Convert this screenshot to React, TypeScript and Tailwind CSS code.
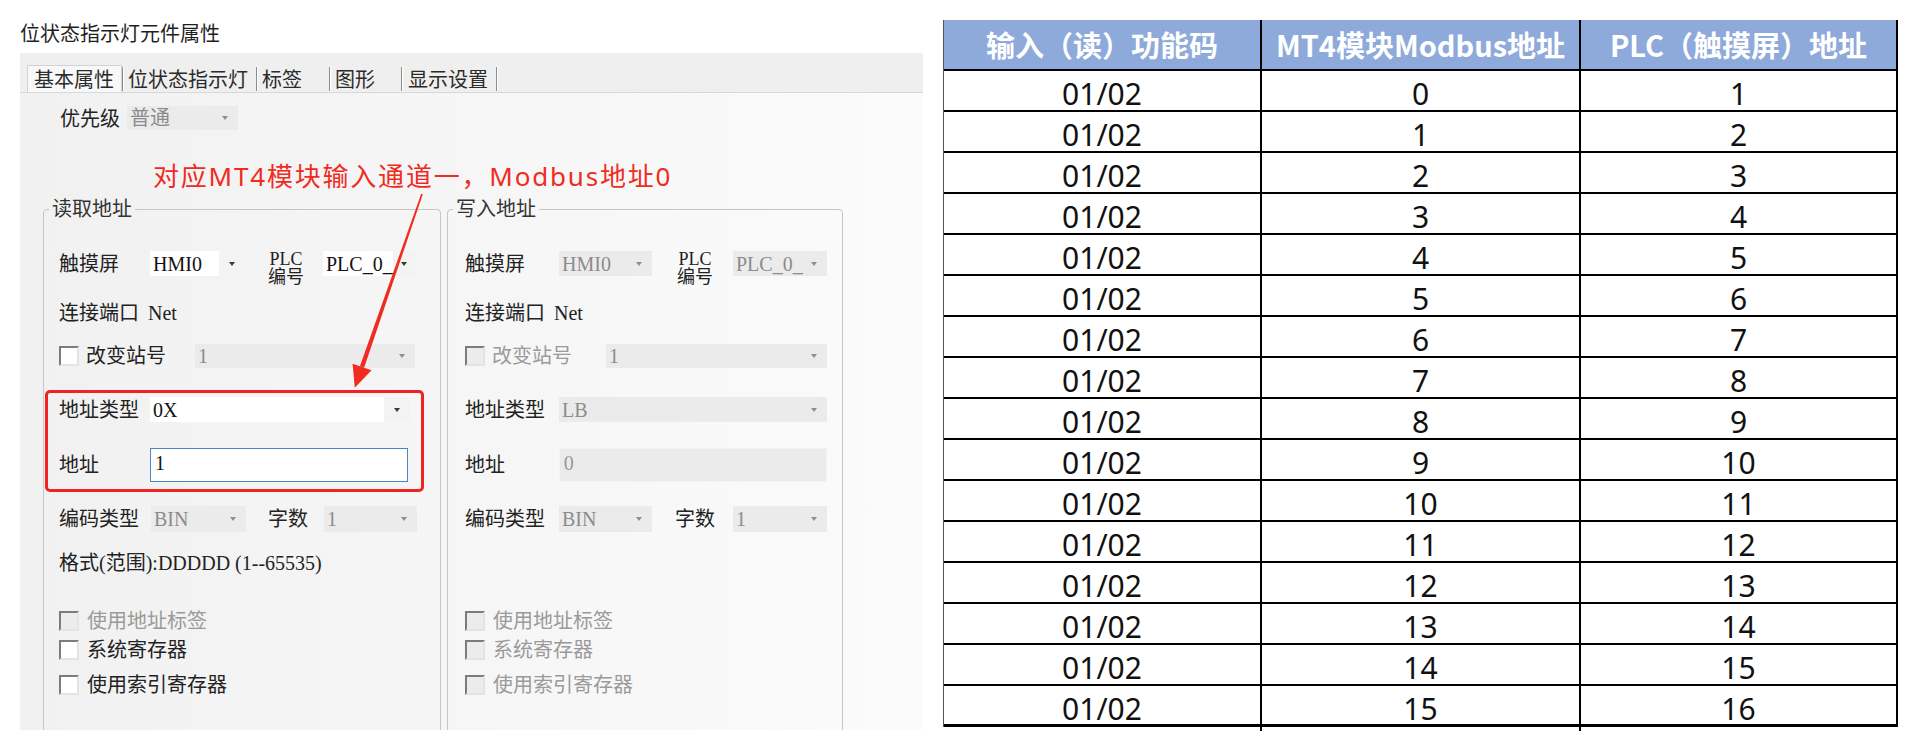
import React from 'react';

const SERIF = "font-['Liberation_Serif','Noto_Sans_CJK_SC',serif]";
const SANS = "font-['Noto_Sans_CJK_SC',sans-serif]";

const Caret: React.FC<{ dim?: boolean }> = ({ dim }) => (
  <svg width="6" height="4" viewBox="0 0 6 4" className="shrink-0">
    <path d="M0 0h6L3 4z" fill={dim ? '#8f8f8f' : '#3a3a3a'} />
  </svg>
);

const Select: React.FC<{ value: string; className: string; disabled?: boolean }> = ({ value, className, disabled }) =>
  disabled ? (
    <div className={`flex items-center justify-between bg-[#ebebeb] text-[#8c8c8c] pl-[3px] pr-[10px] ${className}`}>
      <span>{value}</span>
      <Caret dim />
    </div>
  ) : (
    <div className={`flex items-stretch bg-white text-[#111] ${className}`}>
      <span className="flex-1 flex items-center pl-[3px]">{value}</span>
      <span className="w-[26px] bg-[#f3f3f3] flex items-center justify-center">
        <Caret />
      </span>
    </div>
  );

const Check: React.FC<{ disabled?: boolean }> = ({ disabled }) => (
  <span
    className={`w-[20px] h-[20px] shrink-0 border-2 border-t-[#7c7c7c] border-l-[#7c7c7c] border-r-[#e3e3e3] border-b-[#e3e3e3] ${
      disabled ? 'bg-[#ececec]' : 'bg-white'
    }`}
  />
);

const Group: React.FC<{ read?: boolean }> = ({ read }) => {
  const lab = read ? 'w-[91px]' : 'w-[94px]';
  const dim = 'text-[#9a9a9a]';
  return (
    <fieldset className={`${read ? 'w-[398px]' : 'w-[396px]'} h-[560px] shrink-0 border border-[#c6c6c6] rounded-[4px]`}>
      <legend className="ml-[5px] px-[3px] leading-[20px] text-[#333]">{read ? '读取地址' : '写入地址'}</legend>
      <div className={`flex flex-col ${read ? 'pl-[15px]' : 'pl-[17px]'}`}>
        {/* 触摸屏 / PLC编号 */}
        <div className="mt-[32px] h-[35px] flex items-start">
          <div className={`${lab} h-[25px] flex items-center`}>触摸屏</div>
          <Select value="HMI0" disabled={!read} className={`${read ? 'w-[95px]' : 'w-[93px]'} h-[25px]`} />
          <div className={read ? 'ml-[21px] w-[57px]' : 'ml-[23px] w-[58px]'}>
            <div className="w-[40px] -mt-[1px] text-center text-[18px] leading-[18px]">
              <div>PLC</div>
              <div>编号</div>
            </div>
          </div>
          <Select value="PLC_0_" disabled={!read} className={`${read ? 'w-[92px]' : 'w-[94px]'} h-[25px]`} />
        </div>

        <div className="mt-[15px] h-[24px] flex items-center">
          连接端口<span className="ml-[9px]">Net</span>
        </div>

        <div className="mt-[18px] h-[26px] flex items-center">
          <Check disabled={!read} />
          <span className={`ml-[7px] ${read ? '' : dim}`}>改变站号</span>
          <Select value="1" disabled className={`${read ? 'ml-[29px] w-[220px]' : 'ml-[34px] w-[221px]'} h-[24px]`} />
        </div>

        {/* address block */}
        <div
          className={`mt-[21px] -ml-[14px] w-[379px] border-[3px] rounded-[5px] pl-[11px] pt-[4px] pb-[7px] ${
            read ? 'border-[#ef2320]' : 'border-transparent'
          }`}
        >
          <div className="h-[25px] flex items-center">
            <div className={lab}>地址类型</div>
            {read ? (
              <Select value="0X" className="w-[260px] h-[25px]" />
            ) : (
              <Select value="LB" disabled className="w-[268px] h-[25px]" />
            )}
          </div>
          <div className="mt-[26px] h-[34px] flex items-center">
            <div className={lab}>地址</div>
            {read ? (
              <div className="w-[258px] h-[34px] bg-white border border-[#4a86c5] pl-[4px] pt-[2px] leading-[24px] text-[#111]">1</div>
            ) : (
              <div className="w-[269px] h-[34px] bg-[#ebebeb] border border-[#f4f4f4] pl-[4px] pt-[2px] leading-[24px] text-[#999]">0</div>
            )}
          </div>
        </div>

        <div className="mt-[14px] h-[26px] flex items-center">
          <div className={read ? 'w-[92px]' : 'w-[94px]'}>编码类型</div>
          <Select value="BIN" disabled className={`${read ? 'w-[95px]' : 'w-[93px]'} h-[26px]`} />
          <div className={read ? 'ml-[22px] w-[56px]' : 'ml-[23px] w-[58px]'}>字数</div>
          <Select value="1" disabled className={`${read ? 'w-[93px]' : 'w-[94px]'} h-[26px]`} />
        </div>

        <div className="mt-[19px] h-[24px] flex items-center">{read ? '格式(范围):DDDDD (1--65535)' : ''}</div>

        <div className="mt-[35px] h-[22px] flex items-center">
          <Check disabled />
          <span className={`ml-[8px] ${dim}`}>使用地址标签</span>
        </div>
        <div className="mt-[7px] h-[22px] flex items-center">
          <Check disabled={!read} />
          <span className={`ml-[8px] ${read ? '' : dim}`}>系统寄存器</span>
        </div>
        <div className="mt-[13px] h-[22px] flex items-center">
          <Check disabled={!read} />
          <span className={`ml-[8px] ${read ? '' : dim}`}>使用索引寄存器</span>
        </div>
      </div>
    </fieldset>
  );
};

const tabs = [
  { label: '基本属性', cls: 'w-[95px] pl-[6px] border border-b-0 border-[#d2d2d2] bg-[#f8f8f8]' },
  { label: '位状态指示灯', cls: 'w-[132px] pl-[4px]' },
  { label: '标签', cls: 'w-[71px] pl-[4px]' },
  { label: '图形', cls: 'w-[70px] pl-[4px]' },
  { label: '显示设置', cls: 'w-[93px] pl-[5px]' },
];

const rows = Array.from({ length: 16 }, (_, i) => i);

export default function App() {
  return (
    <div className="relative w-[1920px] h-[750px] bg-white flex overflow-hidden">
      {/* Left: dialog screenshot */}
      <div className="ml-[20px] w-[903px] shrink-0">
        <div className={`h-[53px] pt-[21px] leading-[24px] text-[20px] text-[#1f1f1f] ${SANS}`}>位状态指示灯元件属性</div>

        <div className={`h-[677px] overflow-hidden text-[20px] leading-[24px] text-[#222] ${SERIF}`}>
          {/* tab bar */}
          <div className={`h-[40px] pt-[12px] pl-[7px] bg-[#efefef] border-b border-[#d8d8d8] flex items-stretch ${SANS}`}>
            {tabs.map((t) => (
              <React.Fragment key={t.label}>
                <div className={`h-[27px] flex items-center text-[#2b2b2b] ${t.cls}`}>{t.label}</div>
                <div className="w-[2px] mt-[2px] mb-[1px] border-l border-r border-l-[#8c8c8c] border-r-[#ffffff]" />
              </React.Fragment>
            ))}
          </div>

          {/* content */}
          <div className="h-[637px] px-[23px] bg-gradient-to-r from-[#f1f1f1] to-[#fbfbfb] flex flex-col">
            <div className="mt-[13px] ml-[17px] h-[24px] flex items-center">
              <span className={`w-[67px] ${SANS}`}>优先级</span>
              <Select value="普通" disabled className="w-[111px] h-[24px]" />
            </div>

            <div className="mt-[31px] ml-[110px] h-[30px] leading-[30px] text-[26px] tracking-[1.8px] text-[#f02b1f] font-['Noto_Sans','Noto_Sans_CJK_SC',sans-serif]">
              对应MT4模块输入通道一，Modbus地址0
            </div>

            <div className="mt-[8px] flex gap-[6px]">
              <Group read />
              <Group />
            </div>
          </div>
        </div>
      </div>

      {/* Right: mapping table */}
      <div className="ml-[20px] mt-[20px] w-[955px] h-fit shrink-0 border-l border-l-[#555] border-r-2 border-r-black">
        <div className={`grid grid-cols-[318px_319px_1fr] h-[51px] bg-[#8eaadb] border-b-2 border-black text-white font-bold text-[29px] ${SANS}`}>
          <div className="flex items-center justify-center border-r-2 border-black">输入（读）功能码</div>
          <div className="flex items-center justify-center border-r-2 border-black">MT4模块Modbus地址</div>
          <div className="flex items-center justify-center">PLC（触摸屏）地址</div>
        </div>
        {rows.map((i) => (
          <div
            key={i}
            className={`grid grid-cols-[318px_319px_1fr] h-[41px] border-b-2 border-black text-[30px] text-[#111] font-['Noto_Sans',sans-serif] ${
              i === 15 ? 'border-b-[3px]' : ''
            }`}
          >
            <div className="flex items-center justify-center border-r-2 border-black">01/02</div>
            <div className="flex items-center justify-center border-r-2 border-black">{i}</div>
            <div className="flex items-center justify-center">{i + 1}</div>
          </div>
        ))}
      </div>

      {/* red annotation arrow */}
      <svg className="absolute left-0 top-0 pointer-events-none" width="960" height="750">
        <polygon points="422.8,194.3 364.1,367.7 359.9,366.3 421.2,193.7" fill="#f02b1f" />
        <polygon points="354.8,387.8 371.5,370.3 352.6,363.7" fill="#f02b1f" />
      </svg>
    </div>
  );
}
